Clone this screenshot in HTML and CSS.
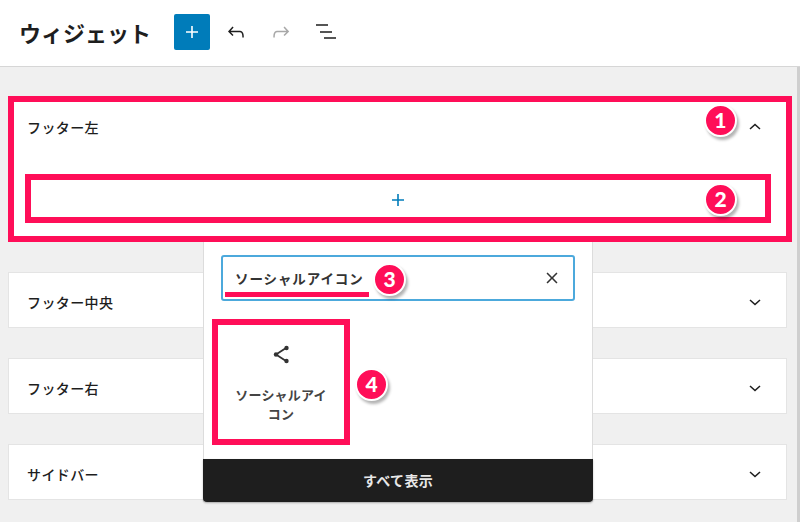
FILE: index.html
```html
<!DOCTYPE html>
<html lang="ja">
<head>
    <meta charset="UTF-8">
    <meta name="viewport" content="width=device-width, initial-scale=1.0">
    <title>ウィジェット</title>
    <link rel="stylesheet" href="styles.css">
</head>
<body>
    <header class="topbar">
        <h1 class="title">ウィジェット</h1>
        <button class="add-btn" type="button">
            <svg width="24" height="24" viewBox="0 0 24 24"><path d="M18 11.2h-5.2V6h-1.6v5.2H6v1.6h5.2V18h1.6v-5.2H18z"/></svg>
        </button>
        <button class="tool undo" type="button">
            <svg width="24" height="24" viewBox="0 0 24 24"><path d="M18.3 11.7c-.6-.6-1.4-.9-2.3-.9H6.7l2.9-3.3-1.1-1-4.5 5L8.5 16l1-1-2.7-2.7H16c.5 0 .9.2 1.3.5 1 1 1 3.4 1 4.500v.3h1.5v-.2c0-1.5 0-4.3-1.5-5.7z"/></svg>
        </button>
        <button class="tool redo" type="button">
            <svg width="24" height="24" viewBox="0 0 24 24"><path d="M15.6 6.5l-1.1 1 2.9 3.3H8c-.9 0-1.7.3-2.3.9-1.4 1.5-1.4 4.2-1.4 5.6v.2h1.5v-.3c0-1.1 0-3.5 1-4.5.3-.3.7-.5 1.3-.5h9.2L14.5 15l1.1 1.1 4.6-4.6-4.6-5z"/></svg>
        </button>
        <button class="tool list" type="button">
            <svg width="24" height="24" viewBox="0 0 24 24"><path d="M2 4.200h12v1.600H2zM6 11.200h12v1.600H6zM10 17.200h12v1.600H10z"/></svg>
        </button>
    </header>

    <main class="content">
        <section class="panel open">
            <div class="panel-head">
                <span>フッター左</span>
                <svg class="chevron" width="24" height="24" viewBox="0 0 24 24"><path d="M6.5 14.5l5.5-5 5.5 5-1 1.1-4.5-4.1-4.5 4.1z"/></svg>
                <span class="badge badge-1">1</span>
            </div>
            <div class="appender">
                <svg width="24" height="24" viewBox="0 0 24 24"><path d="M18 12.200h-5.200V7h-1.600v5.200H6v1.600h5.200V19h1.600v-5.200H18z"/></svg>
                <span class="badge badge-2">2</span>
            </div>
        </section>

        <section class="panel">
            <div class="panel-head">
                <span>フッター中央</span>
                <svg class="chevron" width="24" height="24" viewBox="0 0 24 24"><path d="M17.5 10.5l-5.5 5-5.5-5 1-1.1 4.5 4.1 4.5-4.1z"/></svg>
            </div>
        </section>
        <section class="panel">
            <div class="panel-head">
                <span>フッター右</span>
                <svg class="chevron" width="24" height="24" viewBox="0 0 24 24"><path d="M17.5 10.5l-5.5 5-5.5-5 1-1.1 4.5 4.1 4.5-4.1z"/></svg>
            </div>
        </section>
        <section class="panel">
            <div class="panel-head">
                <span>サイドバー</span>
                <svg class="chevron" width="24" height="24" viewBox="0 0 24 24"><path d="M17.5 10.5l-5.5 5-5.5-5 1-1.1 4.5 4.1 4.5-4.1z"/></svg>
            </div>
        </section>

        <div class="inserter">
            <div class="inserter-body">
                <div class="search">
                    <span class="search-text">ソーシャルアイコン</span>
                    <svg class="search-clear" width="24" height="24" viewBox="0 0 24 24"><path d="M12 13.1l4.4 4.4 1.1-1.1-4.4-4.4 4.4-4.4-1.1-1.1-4.4 4.4-4.4-4.4-1.1 1.1 4.4 4.4-4.4 4.4 1.1 1.1z"/></svg>
                    <span class="underline"></span>
                    <span class="badge badge-3">3</span>
                </div>
                <div class="result">
                    <div class="block-item">
                        <svg width="24" height="24" viewBox="0 0 24 24">
                            <path class="share-line" d="M17 6l-10 6.500 10 6.500"/>
                            <circle cx="7" cy="12.500" r="2.200"/>
                            <circle cx="17.500" cy="6" r="2.200"/>
                            <circle cx="17.500" cy="19" r="2.200"/>
                        </svg>
                        <span class="block-label">ソーシャルアイコン</span>
                    </div>
                    <span class="badge badge-4">4</span>
                </div>
            </div>
            <div class="show-all">すべて表示</div>
        </div>
    </main>
</body>
</html>
```

FILE: styles.css
```css
* {
    box-sizing: border-box;
}
body {
    margin: 0;
    width: 800px;
    height: 522px;
    overflow: hidden;
    background: #f0f0f0;
    color: #1e1e1e;
    font-family: "Noto Sans CJK JP", "Noto Sans", sans-serif;
}
button {
    padding: 0;
    border: none;
    background: none;
    display: flex;
    align-items: center;
    justify-content: center;
}

/* top bar */
.topbar {
    height: 67px;
    background: #fff;
    border-bottom: 1px solid #d6d6d6;
    display: flex;
    align-items: center;
    padding: 0 0 2px 19px;
}
.title {
    margin: 0 23px 0 0;
    font-size: 22px;
    line-height: 30px;
    font-weight: 700;
    color: #1e1e1e;
}
.add-btn {
    width: 36px;
    height: 36px;
    background: #007cba;
    border-radius: 2px;
    fill: #fff;
    margin-right: 8px;
}
.tool {
    width: 36px;
    height: 36px;
    margin-right: 9px;
    fill: #1e1e1e;
}
.redo {
    fill: #a8a8a8;
}

/* widget areas */
.content {
    position: relative;
    height: 455px;
    padding: 29px 0 0 8px;
    border-right: 3px solid #cfcfcf;
}
.panel {
    width: 779px;
    height: 56px;
    margin-bottom: 30px;
    background: #fff;
    border: 1px solid #e4e4e4;
}
.panel.open {
    width: 784px;
    height: 146px;
    margin-bottom: 30px;
    border: 6px solid #ff0e58;
}
.panel-head {
    position: relative;
    height: 54px;
    padding: 4px 19px 0 18px;
    display: flex;
    align-items: center;
    justify-content: space-between;
    font-size: 14px;
    line-height: 20px;
    font-weight: 500;
    letter-spacing: 0.400px;
}
.panel.open .panel-head {
    height: 50px;
    padding: 0 19px 0 13px;
}
.panel.open .chevron {
    margin-top: -2px;
}
.chevron {
    fill: #1e1e1e;
}
.appender {
    position: relative;
    width: 746px;
    height: 49px;
    margin: 22px 0 0 11px;
    border: 6px solid #ff0e58;
    display: flex;
    align-items: center;
    justify-content: center;
    fill: #007cba;
}

/* numbered markers */
.badge {
    position: absolute;
    width: 33px;
    height: 33px;
    border: 2px solid #fff;
    border-radius: 50%;
    background: #ff0e58;
    color: #fff;
    font-family: "Lato", "Noto Sans", sans-serif;
    font-size: 21px;
    line-height: 28px;
    font-weight: 900;
    text-align: center;
    box-shadow: 2px 3px 3px rgba(0, 0, 0, 0.3);
}
.badge-1 {
    top: 2px;
    left: 690px;
}
.badge-2 {
    top: 3px;
    left: 673px;
}
.badge-3 {
    top: 6px;
    left: 150px;
}
.badge-4 {
    top: 49px;
    left: 143px;
}

/* block inserter popover */
.inserter {
    position: absolute;
    top: 175px;
    left: 203px;
    width: 390px;
    height: 260px;
    background: #fff;
    border-left: 1px solid #dcdcdc;
    border-right: 1px solid #dcdcdc;
    display: flex;
    flex-direction: column;
}
.inserter-body {
    flex: 1;
    padding: 13px 17px 0 17px;
}
.search {
    position: relative;
    height: 46px;
    border: 2px solid #4ca9dc;
    border-radius: 3px;
    padding: 0 9px 0 12px;
    display: flex;
    align-items: center;
    justify-content: space-between;
    fill: #333;
}
.search-text {
    font-size: 13.500px;
    line-height: 20px;
    font-weight: 700;
    letter-spacing: 0.900px;
    margin-top: -1px;
    color: #333;
}
.underline {
    position: absolute;
    left: 2px;
    top: 35px;
    width: 144px;
    height: 5px;
    background: #ff0e58;
}
.result {
    position: relative;
    margin: 18px 0 0 -9px;
}
.block-item {
    width: 138px;
    height: 126px;
    border: 6px solid #ff0e58;
    display: flex;
    flex-direction: column;
    align-items: center;
    padding-top: 17px;
    fill: #333;
}
.share-line {
    fill: none;
    stroke: #333;
    stroke-width: 1.800;
}
.block-label {
    margin-top: 19px;
    padding: 0 11px;
    font-size: 13px;
    line-height: 19px;
    font-weight: 700;
    letter-spacing: 0.200px;
    text-align: center;
    color: #444;
}
.show-all {
    height: 43px;
    background: #1e1e1e;
    border-radius: 0 0 4px 4px;
    margin: 0 -1px;
    color: #e8e8e8;
    font-size: 14px;
    letter-spacing: 0.300px;
    line-height: 43px;
    font-weight: 700;
    text-align: center;
    box-shadow: 0 1px 2px rgba(0, 0, 0, 0.3);
}
```
